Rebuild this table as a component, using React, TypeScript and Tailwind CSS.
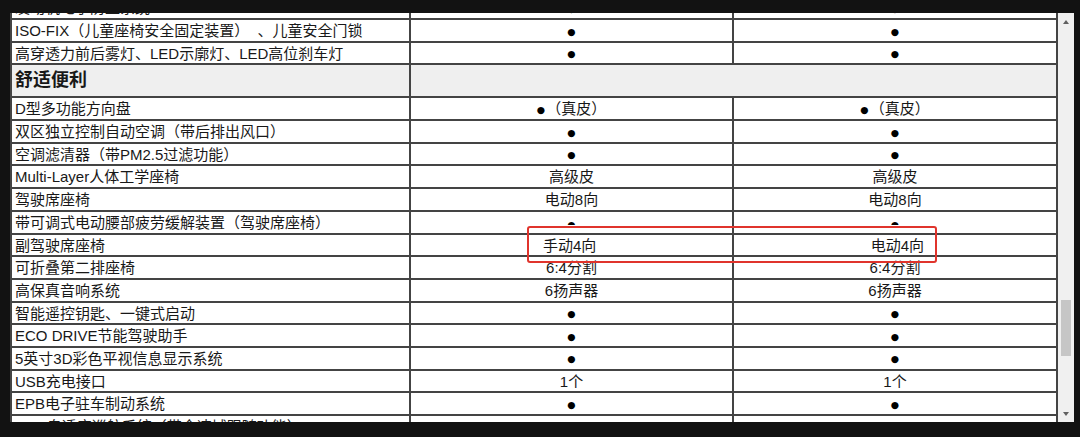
import React from 'react';

type Row = {
  label: string;
  a?: string;
  b?: string;
  kind?: 'header' | 'half' | 'split';
};

const rows: Row[] = [
  { label: '发动机电子防盗系统', a: '●', b: '●' },
  { label: 'ISO-FIX（儿童座椅安全固定装置）\u00a0\u00a0、儿童安全门锁', a: '●', b: '●' },
  { label: '高穿透力前后雾灯、LED示廓灯、LED高位刹车灯', a: '●', b: '●' },
  { label: '舒适便利', kind: 'header' },
  { label: 'D型多功能方向盘', a: '●（真皮）', b: '●（真皮）' },
  { label: '双区独立控制自动空调（带后排出风口）', a: '●', b: '●' },
  { label: '空调滤清器（带PM2.5过滤功能）', a: '●', b: '●' },
  { label: 'Multi-Layer人体工学座椅', a: '高级皮', b: '高级皮' },
  { label: '驾驶席座椅', a: '电动8向', b: '电动8向' },
  { label: '带可调式电动腰部疲劳缓解装置（驾驶席座椅）', kind: 'half' },
  { label: '副驾驶席座椅', a: '手动4向', b: '电动4向', kind: 'split' },
  { label: '可折叠第二排座椅', a: '6:4分割', b: '6:4分割' },
  { label: '高保真音响系统', a: '6扬声器', b: '6扬声器' },
  { label: '智能遥控钥匙、一键式启动', a: '●', b: '●' },
  { label: 'ECO DRIVE节能驾驶助手', a: '●', b: '●' },
  { label: '5英寸3D彩色平视信息显示系统', a: '●', b: '●' },
  { label: 'USB充电接口', a: '1个', b: '1个' },
  { label: 'EPB电子驻车制动系统', a: '●', b: '●' },
  { label: 'ACC自适应巡航系统（带全速域跟随功能）', a: '●', b: '●' },
];

// renders the value, with the bullet glyph drawn smaller than the text
function Value({ text }: { text: string }) {
  if (text.startsWith('●')) {
    return (
      <span className="flex items-center">
        <span className="font-['DejaVu_Sans'] text-[9.5px] leading-none text-black">●</span>
        {text.slice(1) && <span className="ml-[1px]">{text.slice(1)}</span>}
      </span>
    );
  }
  return <span>{text}</span>;
}

function HalfDot() {
  return (
    <div className="h-[5px] mt-[8px] overflow-hidden">
      <span className="block font-['DejaVu_Sans'] text-[9.5px] leading-[9px] text-black">●</span>
    </div>
  );
}

export default function App() {
  return (
    <div className="relative w-[1080px] h-[437px] bg-[#121212] overflow-hidden font-['Liberation_Sans','Noto_Sans_CJK_SC',sans-serif] text-[15px] text-[#181818]">
      <div className="flex ml-[10px] mt-[13px] w-[1064px] h-[409px] bg-white">
        {/* table viewport */}
        <div className="w-[1048px] h-full overflow-hidden border-x-2 border-[#444]">
          <div className="mt-[-15.7px]">
            {rows.map((r, i) => {
              if (r.kind === 'header') {
                return (
                  <div
                    key={i}
                    className="grid grid-cols-[399px_1fr] h-[33px] bg-[#efefef] border-b-2 border-[#444]"
                  >
                    <div className="flex items-center pl-[3px] border-r-2 border-[#444] text-[18px] font-bold">
                      {r.label}
                    </div>
                    <div />
                  </div>
                );
              }
              return (
                <div
                  key={i}
                  className="grid grid-cols-[399px_323px_1fr] h-[22.7px] border-b-2 border-[#444]"
                >
                  <div className="flex items-center pl-[3px] border-r-2 border-[#444] whitespace-nowrap">
                    {r.label}
                  </div>
                  {r.kind === 'half' ? (
                    <>
                      <div className="flex justify-center border-r-2 border-[#444]">
                        <HalfDot />
                      </div>
                      <div className="flex justify-center">
                        <HalfDot />
                      </div>
                    </>
                  ) : r.kind === 'split' ? (
                    <>
                      <div className="flex items-center pl-[132px] border-r-2 border-[#444]">{r.a}</div>
                      <div className="flex items-center justify-end pr-[132px]">{r.b}</div>
                    </>
                  ) : (
                    <>
                      <div className="flex items-center justify-center border-r-2 border-[#444]">
                        <Value text={r.a ?? ''} />
                      </div>
                      <div className="flex items-center justify-center">
                        <Value text={r.b ?? ''} />
                      </div>
                    </>
                  )}
                </div>
              );
            })}
          </div>
        </div>

        {/* scrollbar */}
        <div className="w-[16px] h-full bg-[#f0f0f0] flex flex-col">
          <div className="h-[17px] flex items-center justify-center">
            <div className="w-0 h-0 border-x-[3px] border-x-transparent border-b-[4px] border-b-[#606060]" />
          </div>
          <div className="flex-1">
            <div className="mt-[270px] mx-auto w-[10px] h-[56px] bg-[#c6c6c6]" />
          </div>
          <div className="h-[17px] flex items-center justify-center">
            <div className="w-0 h-0 border-x-[3px] border-x-transparent border-t-[4px] border-t-[#606060]" />
          </div>
        </div>
      </div>

      {/* red highlight box */}
      <div className="absolute left-[527px] top-[226px] w-[410px] h-[37px] border-2 border-[#e0342c] rounded-[3px]" />
    </div>
  );
}
